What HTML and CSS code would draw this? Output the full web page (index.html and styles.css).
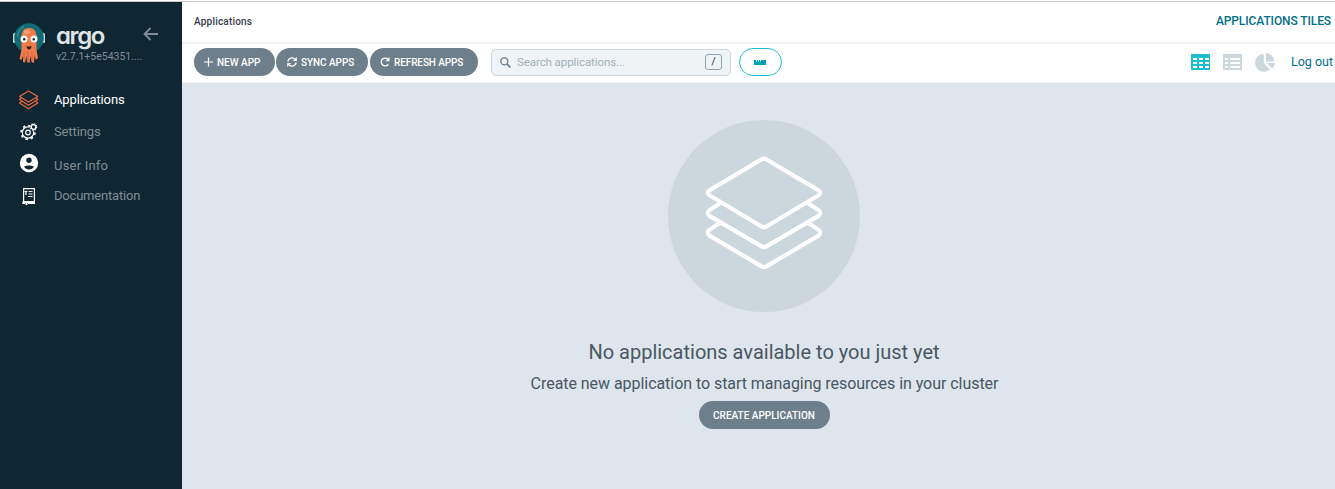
FILE: index.html
```html
<!DOCTYPE html>
<html lang="en">
<head>
<meta charset="utf-8">
<title>Applications</title>
<link rel="stylesheet" href="styles.css">
</head>
<body>
<div class="layout">
  <nav class="sidebar">
    <div class="brand">
      <svg class="mascot" width="34" height="44" viewBox="0 0 34 44">
        <rect x="1" y="11" width="32" height="10" rx="1.5" fill="#c5dde3"/>
        <circle cx="17" cy="16" r="14.8" fill="#126b74"/>
        <path d="M5.5 15Q6 8 12 4.500" fill="none" stroke="#6aa6aa" stroke-width=".7"/>
        <path d="M9.500 15C9.500 9 12 6 17 6S24.500 9 24.500 15V28L26 36L24 38L22.500 34L22 41L19.500 40L18.500 34L17.500 41L15 40L14.500 34L13 40.500L11 40V34L9.500 38L7.500 37L9.500 28Z" fill="#ef7b4d"/>
        <ellipse cx="15" cy="10" rx="3" ry="2" fill="#f6a07a"/>
        <path d="M12 30V38M16 30V39M20 30V38" stroke="#c95c3a" stroke-width=".8"/>
        <circle cx="12" cy="17" r="3.500" fill="#fff"/><circle cx="22" cy="17" r="3.500" fill="#fff"/>
        <circle cx="12.200" cy="17.200" r="1.200" fill="#202020"/><circle cx="21.800" cy="17.200" r="1.200" fill="#202020"/>
        <path d="M14.500 24Q17 25.500 19.500 24Q19 27.500 17 27.500T14.500 24Z" fill="#2a1720"/>
      </svg>
      <div class="brand-text">
        <div class="brand-name">argo</div>
        <div class="version">v2.7.1+5e54351....</div>
      </div>
      <svg class="back" width="16" height="14" viewBox="0 0 16 14" fill="none" stroke="#818d94" stroke-width="1.800"><path d="M15 7H2M7.500 1L1.500 7L7.500 13"/></svg>
    </div>
    <ul class="menu">
      <li class="item active">
        <svg width="20" height="20" viewBox="0 0 20 20" fill="none" stroke="#f2693c" stroke-width="1.100" stroke-linejoin="round"><path d="M9.500 1L18.800 6.500L9.500 12L.5 6.500Z"/><path d="M2.500 8L.5 9.500L9.500 15.300L18.800 9.500L17 8M2.500 11.500L.5 13L9.500 18.800L18.800 13L17 11.500"/></svg>
        <span>Applications</span></li>
      <li class="item settings">
        <svg width="20" height="20" viewBox="0 0 20 20" fill="none" stroke="#fff"><circle cx="9" cy="11.500" r="5.700" stroke-width="1.200"/><circle cx="9" cy="11.500" r="6.900" stroke-width="1.800" stroke-dasharray="2.400 3.019"/><circle cx="9" cy="11.500" r="2.300" stroke-width="1.200"/><circle cx="14.500" cy="6" r="3.800" fill="#0f2733" stroke="none"/><circle cx="14.500" cy="6" r="2.300" stroke-width="1.300"/><circle cx="14.500" cy="6" r="3.200" stroke-width="1.100" stroke-dasharray="1.300 1.213"/></svg>
        <span>Settings</span></li>
      <li class="item user">
        <svg width="20" height="20" viewBox="0 0 20 20"><circle cx="10" cy="10" r="9.200" fill="#fff"/><circle cx="10" cy="7.300" r="2.700" fill="#0f2733"/><path d="M5 13.500Q10 11.500 15 13.500Q13.500 16.500 10 16.500T5 13.500Z" fill="#0f2733"/></svg>
        <span>User Info</span></li>
      <li class="item docs">
        <svg width="20" height="20" viewBox="0 0 20 20" fill="none" stroke="#fff" stroke-width="1.200"><path d="M4.600 16V2.600H15.400V17.500H9M4 15.500V17.500H6"/><path d="M5.500 5.500H8.300M7 5.500V9M9.500 5.500H13.500M9.500 8H13.500M9 10.500H13.500"/><path d="M4 16H15.500" stroke-width="2"/><path d="M7.500 16.500V19" stroke-width="2"/></svg>
        <span>Documentation</span></li>
    </ul>
  </nav>
  <main class="main">
    <header class="topbar"><span class="crumb">Applications</span><span class="view-title">APPLICATIONS TILES</span></header>
    <div class="toolbar">
      <button class="btn new"><svg width="9" height="10" viewBox="0 0 9 10" stroke="#fff" stroke-width="1.200"><path d="M4.500 .5V9.500M0 5H9"/></svg><span>NEW APP</span></button>
      <button class="btn sync"><svg width="10" height="10" viewBox="0 0 10 10" fill="none" stroke="#fff" stroke-width="1.400"><path d="M.8 4.500A4.200 4.200 0 0 1 8 2.200M9.200 5.500A4.200 4.200 0 0 1 2 7.800"/><path d="M9.800 0V4H5.800ZM.2 10V6H4.200Z" fill="#fff" stroke="none"/></svg><span>SYNC APPS</span></button>
      <button class="btn refresh"><svg width="10" height="10" viewBox="0 0 10 10" fill="none" stroke="#fff" stroke-width="1.400"><path d="M8 2.300A3.900 3.900 0 1 0 8.300 7.300"/><path d="M9.500 0V4.200H5.300Z" fill="#fff" stroke="none"/></svg><span>REFRESH APPS</span></button>
      <div class="search">
        <svg width="11" height="11" viewBox="0 0 11 11" fill="none" stroke="#6d7f8b"><circle cx="4.300" cy="4.300" r="3.500" stroke-width="1.300"/><path d="M6.900 6.900L10.300 10.300" stroke-width="1.700"/></svg>
        <span class="placeholder">Search applications...</span><kbd>/</kbd>
      </div>
      <button class="health"><svg width="12" height="5" viewBox="0 0 12 5"><path d="M0 0H2V1.500H3V0H4V1.500H5V0H6V1.500H7V0H12V5H0Z" fill="#00a2b3"/></svg></button>
      <div class="views">
        <svg width="19" height="16" viewBox="0 0 19 16" shape-rendering="crispEdges"><rect width="19" height="16" fill="#1fbdd0"/><path d="M2 5H18M2 9H18M2 13H18" stroke="#fff" stroke-width="2" stroke-dasharray="4 2"/></svg>
        <svg width="19" height="16" viewBox="0 0 19 16" shape-rendering="crispEdges"><rect width="19" height="16" fill="#ccd6dd"/><path d="M2 5H5M7 5H17M2 9H5M7 9H17M2 13H5M7 13H17" stroke="#fff" stroke-width="2"/></svg>
        <svg width="20" height="19" viewBox="0 0 20 19" fill="#ccd6dd"><path d="M8.800 1A8.900 8.900 0 1 0 15 16.500L8.800 10Z"/><path d="M11 0V8.500H19A8.200 8.200 0 0 0 11 0ZM11.500 10H20Q19.500 13.500 17 15.500Z"/></svg>
      </div>
      <a class="logout">Log out</a>
    </div>
    <section class="empty">
      <div class="disc"><svg width="118" height="114" viewBox="0 0 120 116" fill="none" stroke="#fff" stroke-width="4.300" stroke-linejoin="round" stroke-linecap="round"><path d="M57.500 3.500Q60 2 62.500 3.500L115.500 35Q119 37.500 115.500 40L62.500 71.800Q60 73.500 57.500 71.800L4.500 40Q1 37.500 4.500 35Z"/><path d="M14 49L4.500 55Q1 58 4.500 61L57.500 92Q60 93.500 62.500 92L115.500 61Q119 58 115.500 55L106 49"/><path d="M14 69L4.500 75Q1 78 4.500 81L57.500 112.300Q60 113.800 62.500 112.300L115.500 81Q119 78 115.500 75L106 69"/></svg></div>
      <h4>No applications available to you just yet</h4>
      <h5>Create new application to start managing resources in your cluster</h5>
      <button class="btn create"><span>CREATE APPLICATION</span></button>
    </section>
  </main>
</div>
</body>
</html>
```
FILE: styles.css
```css
* { box-sizing: border-box; }
body { margin: 0; background: #fff; font-family: Roboto, "Liberation Sans", sans-serif; overflow: hidden; }
svg { display: block; flex: none; }
button { font-family: inherit; cursor: pointer; }
span, a { white-space: nowrap; }
.layout { display: flex; height: 489px; padding-top: 1px; }
.sidebar { width: 182px; flex: none; background: #0f2733; border-top: 1px solid #c8c8c8; }
.brand { display: flex; height: 82px; padding: 20px 0 0 12px; }
.brand-text { width: 88px; margin-left: 10px; }
.brand-name { height: 28px; font: 600 24px/28px Inter, sans-serif; font-feature-settings: "cv11"; letter-spacing: -1.4px; color: #dfe5e6; }
.version { font-size: 10.500px; line-height: 14px; color: #818d94; white-space: nowrap; }
.back { margin: 5px 0 0 -1px; }
.menu { list-style: none; margin: 0; padding: 0; }
.item { display: flex; align-items: center; height: 32px; padding-left: 19px; gap: 15px; font-size: 13px; letter-spacing: -.12px; color: #818d94; }
.active { height: 30px; color: #fff; }
.active svg { margin-top: 2px; }
.settings { height: 34px; }
.user { height: 33px; letter-spacing: .2px; }
.user svg { margin-bottom: 3px; }
.user span { padding-top: 2px; }
.docs { height: 29px; letter-spacing: -.2px; }
.docs svg { margin-top: 1px; }
.main { flex: 1; min-width: 0; display: flex; flex-direction: column; border-top: 1px solid #c8c8c8; }
.topbar { height: 42px; flex: none; display: flex; justify-content: space-between; align-items: center; padding: 0 4px 2px 12px; border-bottom: 2px solid #eff3f5; }
.crumb { font-size: 10px; font-weight: 500; letter-spacing: .2px; color: #363c4a; }
.view-title { font-size: 12px; font-weight: 500; letter-spacing: -.1px; color: #006f8a; }
.toolbar { height: 39px; flex: none; display: flex; align-items: center; padding: 0 2px 2px 12px; border-bottom: 1px solid #eff3f5; }
.btn { height: 28px; border: 0; border-radius: 14px; background: #6d7f8b; color: #fff; display: flex; align-items: center; padding: 0 0 0 10px; gap: 4px; font-size: 10px; font-weight: 500; }
.new { width: 81px; margin-right: 1px; }
.sync { width: 92px; margin-right: 2px; padding-left: 11px; letter-spacing: -.05px; }
.refresh { width: 108px; letter-spacing: -.1px; }
.search { width: 240px; height: 27px; margin-left: 13px; border: 1px solid #ccd6dd; border-radius: 5px; background: #eff3f5; display: flex; align-items: center; padding: 0 8px; gap: 6px; }
.placeholder { flex: 1; font-size: 11.500px; letter-spacing: -.08px; color: #a3b0b8; }
kbd { width: 17px; height: 16px; border: 1px solid #8fa4b1; border-radius: 3px; font: 11px/14px Roboto, sans-serif; text-align: center; color: #363c4a; }
.health { width: 43px; height: 28px; margin-left: 8px; padding: 0 1px 0 0; border: 1px solid #1fbdd0; border-radius: 14px; background: #fff; display: flex; align-items: center; justify-content: center; }
.views { display: flex; align-items: center; gap: 13px; margin-left: auto; }
.logout { width: 42px; margin: 0 0 2px 16px; font-size: 12.500px; color: #006f8a; }
.empty { flex: 1; background: #dee5ec; display: flex; flex-direction: column; align-items: center; padding: 37px 0 0 11px; }
.disc { width: 192px; height: 192px; flex: none; border-radius: 50%; background: #ccd6dd; display: flex; align-items: center; justify-content: center; padding-bottom: 6px; }
h4, h5 { margin: 0; font-weight: 400; color: #495763; white-space: nowrap; }
h4 { margin-top: 28px; font-size: 20px; line-height: 25px; }
h5 { margin-top: 9px; padding-left: 1px; font-size: 16px; line-height: 20px; letter-spacing: -.05px; }
.create { width: 131px; margin-top: 7px; padding: 0; justify-content: center; }
```
